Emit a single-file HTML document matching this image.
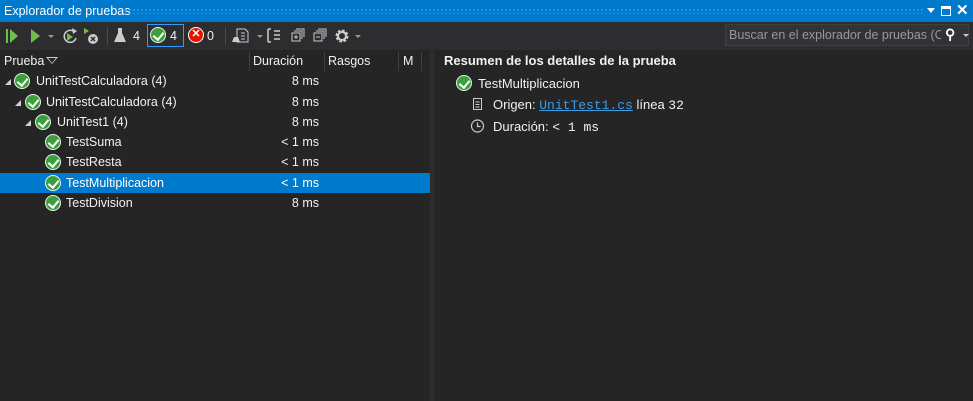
<!DOCTYPE html>
<html><head><meta charset="utf-8"><style>
*{margin:0;padding:0;box-sizing:border-box}
body{width:973px;height:401px;background:#252526;font-family:"Liberation Sans",sans-serif;font-size:12.5px;color:#f1f1f1;position:relative;overflow:hidden}
.abs{position:absolute}
#title{left:0;top:0;width:973px;height:22px;background:#007acc}
#title .t{left:4px;top:4px;font-size:12.5px;color:#fff}
#dots{left:124px;top:8px;width:800px;height:6px;background-image:radial-gradient(#3a95d6 0.8px,transparent 1px);background-size:4px 4px}
#tb{left:0;top:22px;width:973px;height:28px;background:#2d2d30}
.sep{width:1px;height:18px;background:#4a4a4e;top:27px}
.hdr{top:51px;height:20px;line-height:20px;color:#f1f1f1}
.colsep{top:52px;width:1px;height:19px;background:#3f3f46}
.row{height:20px;line-height:20px;left:0;width:430px}
.chk{width:16px;height:16px;border-radius:50%;background:#3c9e3c;border:1.5px solid #e8f5e8;top:2px}
.chk:after{content:"";position:absolute;left:3.5px;top:1.5px;width:5px;height:8px;border:solid #fff;border-width:0 2.5px 2.5px 0;transform:rotate(40deg)}
.arr{width:0;height:0;border-left:6px solid transparent;border-bottom:6px solid #d0d0d0;top:8px}
.dur{right:111px;text-align:right}
</style></head><body>
<div id="title" class="abs"><div class="t abs">Explorador de pruebas</div><div id="dots" class="abs"></div>
<div class="abs" style="left:927px;top:8px;width:0;height:0;border-left:4px solid transparent;border-right:4px solid transparent;border-top:5px solid #fff"></div>
<div class="abs" style="left:941px;top:6px;width:10px;height:10px;border:1.5px solid #fff;border-top-width:3px"></div>
<div class="abs" style="left:956px;top:1px;color:#fff;font-size:15px;font-weight:bold">✕</div>
</div>
<div id="tb" class="abs">
<svg class="abs" style="left:0;top:0" width="380" height="28">
<g fill="#6cc04a"><rect x="6" y="7" width="2" height="14"/><path d="M10 7l8 7-8 7z"/><path d="M31 7l9 7-9 7z"/></g>
<path d="M48 13l3 3 3-3z" fill="#999"/>
<path d="M73 9a6 6 0 1 0 3 7" stroke="#ccc" stroke-width="1.5" fill="none"/><path d="M72 6l5 3-4 3z" fill="#ccc"/><path d="M67 11l6 4-6 4z" fill="#6cc04a"/>
<path d="M84 6l5 3-5 3z" fill="#6cc04a"/><circle cx="93" cy="17" r="5" fill="#ccc"/><path d="M91 15l4 4M95 15l-4 4" stroke="#2d2d30" stroke-width="1.5"/>
<path d="M118 6h4v5l4 9h-12l4-9z" fill="#ccc"/>
<path d="M237 7h8l3 3v10h-11z" fill="none" stroke="#ccc"/><path d="M234 15h4l2 5h-8z" fill="#ccc"/><path d="M241 11h4M241 14h4M241 17h4" stroke="#ccc"/><path d="M257 13l3 3 3-3z" fill="#999"/>
<path d="M268 7v13M268 7h3M268 20h3M274 9h6M274 13h6M274 17h6" stroke="#ccc" stroke-width="1.5"/>
<rect x="292" y="11" width="8" height="8" fill="none" stroke="#ccc"/><path d="M294 9h8v8M296 7h8v8" fill="none" stroke="#ccc"/><path d="M294 15h4M296 13v4" stroke="#ccc"/>
<rect x="314" y="11" width="8" height="8" fill="none" stroke="#ccc"/><path d="M316 9h8v8M318 7h8v8" fill="none" stroke="#ccc"/><path d="M316 15h4" stroke="#ccc"/>
<circle cx="342" cy="14" r="5" fill="none" stroke="#ccc" stroke-width="3" stroke-dasharray="2.5 1.4"/><circle cx="342" cy="14" r="4" fill="none" stroke="#ccc" stroke-width="2"/>
<path d="M355 13l3 3 3-3z" fill="#999"/>
</svg>
<div class="abs" style="left:133px;top:7px">4</div>
<div class="abs" style="left:147px;top:2px;width:37px;height:23px;border:1px solid #3399ff"></div>
<div class="abs chk" style="left:150px;top:5px;position:absolute"></div>
<div class="abs" style="left:170px;top:7px">4</div>
<div class="abs" style="left:188px;top:5px;width:16px;height:16px;border-radius:50%;background:#e51400;border:1.5px solid #fff;color:#fff;font-size:11px;font-weight:bold;text-align:center;line-height:13px">✕</div>
<div class="abs" style="left:207px;top:7px">0</div>
<div class="abs sep" style="left:107px;top:5px"></div>
<div class="abs sep" style="left:225px;top:5px"></div>
<div class="abs" style="left:725px;top:2px;width:244px;height:22px;background:#333337;border:1px solid #3f3f46"></div>
<div class="abs" style="left:729px;top:6px;color:#999;font-size:12.5px;width:212px;overflow:hidden;white-space:nowrap">Buscar en el explorador de pruebas (Ctrl</div>
<div class="abs" style="left:945px;top:4px;color:#fff;font-size:14px;font-weight:bold">⚲</div>
<div class="abs" style="left:963px;top:12px;width:0;height:0;border-left:3px solid transparent;border-right:3px solid transparent;border-top:3px solid #ccc"></div>
</div>
<div class="abs" style="left:430px;top:50px;width:4px;height:351px;background:#2d2d30"></div>
<div class="abs hdr" style="left:4px">Prueba</div>
<div class="abs" style="left:46px;top:57px;width:0;height:0;border-left:6px solid transparent;border-right:6px solid transparent;border-top:7px solid #ccc"></div>
<div class="abs" style="left:48px;top:58px;width:0;height:0;border-left:4px solid transparent;border-right:4px solid transparent;border-top:5px solid #252526"></div>
<div class="abs colsep" style="left:249px"></div><div class="abs hdr" style="left:253px">Duración</div>
<div class="abs colsep" style="left:324px"></div><div class="abs hdr" style="left:328px">Rasgos</div>
<div class="abs colsep" style="left:398px"></div><div class="abs hdr" style="left:403px">M</div>
<div class="abs colsep" style="left:421px"></div>

<div class="abs row" style="top:71px"><div class="abs arr" style="left:5px"></div><div class="abs chk" style="left:14px"></div><span class="abs" style="left:36px">UnitTestCalculadora (4)</span><span class="abs dur">8 ms</span></div>
<div class="abs row" style="top:92px"><div class="abs arr" style="left:15px"></div><div class="abs chk" style="left:25px"></div><span class="abs" style="left:46px">UnitTestCalculadora (4)</span><span class="abs dur">8 ms</span></div>
<div class="abs row" style="top:112px"><div class="abs arr" style="left:25px"></div><div class="abs chk" style="left:35px"></div><span class="abs" style="left:57px">UnitTest1 (4)</span><span class="abs dur">8 ms</span></div>
<div class="abs row" style="top:132px"><div class="abs chk" style="left:45px"></div><span class="abs" style="left:66px">TestSuma</span><span class="abs dur">&lt; 1 ms</span></div>
<div class="abs row" style="top:152px"><div class="abs chk" style="left:45px"></div><span class="abs" style="left:66px">TestResta</span><span class="abs dur">&lt; 1 ms</span></div>
<div class="abs row" style="top:173px;background:#007acc;color:#fff"><div class="abs chk" style="left:45px"></div><span class="abs" style="left:66px">TestMultiplicacion</span><span class="abs dur">&lt; 1 ms</span></div>
<div class="abs row" style="top:193px"><div class="abs chk" style="left:45px"></div><span class="abs" style="left:66px">TestDivision</span><span class="abs dur">8 ms</span></div>

<div class="abs" style="left:444px;top:53px;font-weight:bold;font-size:13px">Resumen de los detalles de la prueba</div>
<div class="abs chk" style="left:456px;top:75px"></div>
<div class="abs" style="left:478px;top:76px;font-size:13px">TestMultiplicacion</div>
<svg class="abs" style="left:472px;top:97px" width="12" height="14"><rect x="1.5" y="1.5" width="8" height="11" fill="none" stroke="#ccc"/><path d="M3.5 5h4M3.5 7.5h4M3.5 10h4" stroke="#ccc"/></svg>
<div class="abs" style="left:493px;top:97px;font-size:13px">Origen: <span style="font-family:'Liberation Mono',monospace;color:#3c9ce6;text-decoration:underline">UnitTest1.cs</span> línea <span style="font-family:'Liberation Mono',monospace">32</span></div>
<svg class="abs" style="left:470px;top:118px" width="16" height="16"><circle cx="7.5" cy="8" r="6" fill="none" stroke="#ccc" stroke-width="1.2"/><path d="M7.5 4.5v4h3" fill="none" stroke="#ccc" stroke-width="1.2"/></svg>
<div class="abs" style="left:493px;top:119px;font-size:13px">Duración: <span style="font-family:'Liberation Mono',monospace">&lt; 1 ms</span></div>
</body></html>
